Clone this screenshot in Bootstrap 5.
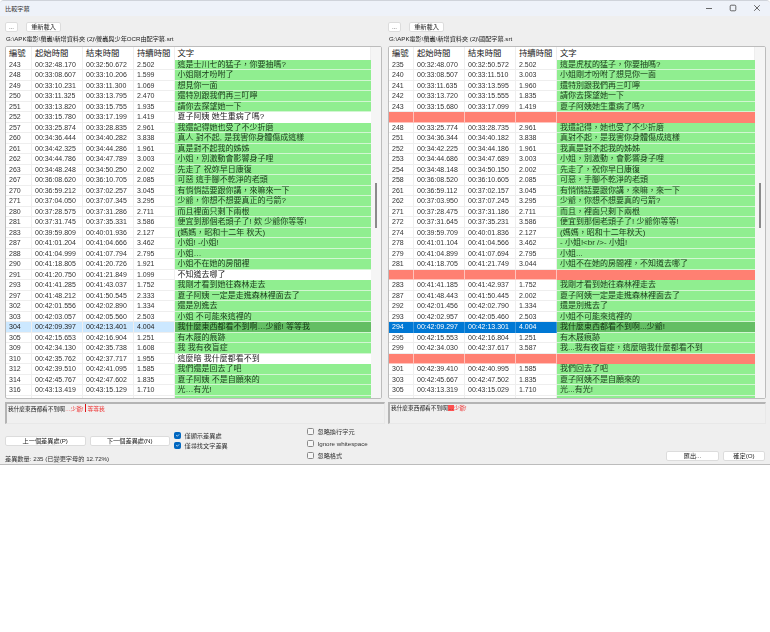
<!DOCTYPE html>
<html lang="zh-Hant">
<head>
<meta charset="utf-8">
<title>比較字幕</title>
<link href="https://cdn.jsdelivr.net/npm/bootstrap@5.3.0/dist/css/bootstrap.min.css" rel="stylesheet">
<style>
html,body{background:#fff;margin:0}
body{font-family:"Liberation Sans","Noto Sans CJK TC",sans-serif;color:#222}
.appwin{height:465px;width:770px;background:#efefef;border-bottom:1px solid #bcbcbc;border-top:1px solid #cfd3da;border-radius:4px 4px 0 0;overflow:hidden;filter:blur(.3px)}
.tbar{height:15px;background:#eef2f9;padding:0 9px 0 5px;font-size:6.2px;color:#333}
.tbar svg{display:block}
.panes{display:grid;grid-template-columns:380px 378px;column-gap:3px;padding:6px 4px 0 5px}
.wbtn{background:#fff;border:1px solid #dcdcdc;border-radius:2px;font-size:6.2px;line-height:8px;padding:0;height:10px;color:#222}
.dots{width:13px}.reload{width:35px}
.pathline{height:14px;font-size:6.15px;line-height:14px;padding-left:1px;white-space:nowrap}
.listbox{height:353px;border:1px solid #bcbcbc;border-radius:2px;background:#fff;overflow:hidden}
.lft{width:377px}
.sbar{width:10px;background:#f5f5f5;flex:none}
.sthumb{width:1.5px;height:45px;margin-top:136px;background:#8a8a8a}
.tblwrap{flex:1;overflow:hidden}
.cmp{margin:0;font-size:7px;color:#333}
.cmphead,.cmprow{display:grid;border:0}
.cmprow{height:10.5px;box-shadow:inset 0 -1px 0 #eee}
.lgrid{grid-template-columns:26px 51px 51px 40.5px 1fr}
.rgrid{grid-template-columns:25px 51px 51px 41px 1fr}
.cmphead{height:13.25px;font-size:8.4px;line-height:13px;color:#222;background:#fff}
.cmphead>div{padding-left:3px;border-right:1px solid #eee;white-space:nowrap}
.cmprow>div{padding-left:3px;line-height:10.5px;border-right:1px solid #eee;white-space:nowrap;overflow:hidden;color:#333;min-width:0}
.cmprow>div:last-child{background:#90ee90;font-size:8px;color:#1c3a1c;border-right:0;box-shadow:inset 0 -1px 0 #d2f6d2}
.cmprow.same>div:last-child{background:#fff;color:#222;box-shadow:none}
.cmprow.gap{background:#ff8072;box-shadow:inset 0 -1px 0 #ffc4bd}
.cmprow.gap>div{border-color:#ffc4bd}
.cmprow.gap>div:last-child{background:#ff8072;box-shadow:none}
.cmprow.selgrey{background:#cce8ff}
.cmprow.selgrey>div{color:#222}
.cmprow.selblue{background:#0078d4;box-shadow:none}
.cmprow.selblue>div{color:#fff;border-color:#3f98dd}
.cmprow.selgrey>div:last-child,.cmprow.selblue>div:last-child{background:#64be64;color:#123212}
.difftxt{height:22px;margin-top:3px;border:1px solid #e8e8e8;border-top:2px solid #b4b4b4;border-left:2px solid #b4b4b4;background:#f0f0f0;font-size:5.7px;line-height:9px;padding:0 0 0 1px;white-space:nowrap}
.dlft{width:380px}
.dm{color:#e33}.dbar{display:inline-block;width:1px;height:8px;background:#d11;margin:0 1.5px;vertical-align:-1.5px}
.dhit{background:#ff5050;color:#333;padding:0 .5px}
.lower{height:41px;padding:0 5px;font-size:6.2px}
.cola{width:165px;padding-top:12px}
.cola .wbtn{width:80.5px}
.status{margin-top:8px;line-height:9px;color:#333;white-space:nowrap;font-size:6.2px}
.colb{width:133px;margin-left:4px;padding-top:7px}
.colc{padding-top:2px}
.colb .chk{height:10px}
.colc .chk{height:12px}
.chk{color:#333;white-space:nowrap}
.chk .form-check-input{width:7px;height:7px;margin:0 3.5px 0 0;border-radius:1.5px;flex:none;border-color:#8a8a8a;background-color:#f6f6f6}
.chk .form-check-input:checked{background-color:#0067c0;border-color:#0067c0}
.cold{padding-top:27px}
.expbtn{width:53px}.okbtn{width:42px}
</style>
</head>
<body>
<div class="appwin d-flex flex-column">
  <div class="tbar d-flex align-items-center justify-content-between">
    <span>比較字幕</span>
    <div class="d-flex gap-3">
      <svg width="8" height="8" viewBox="0 0 8 8"><path d="M1 4.5h6" stroke="#444" stroke-width=".8"/></svg>
      <svg width="8" height="8" viewBox="0 0 8 8"><rect x="1.2" y="1.2" width="5.6" height="5.6" rx="1" fill="none" stroke="#444" stroke-width=".8"/></svg>
      <svg width="8" height="8" viewBox="0 0 8 8"><path d="M1.2 1.2l5.6 5.6M6.8 1.2L1.2 6.8" stroke="#444" stroke-width=".8"/></svg>
    </div>
  </div>
  <div class="panes">
    <div>
      <div class="d-flex gap-2"><button class="wbtn dots">...</button><button class="wbtn reload">重新載入</button></div>
      <div class="pathline">G:\APK電影\螢蟲\新增資料夾 (2)\螢蟲與少年OCR由配字幕.srt</div>
      <div class="listbox lft d-flex">
        <div class="tblwrap cmp">
<div class="cmphead lgrid"><div>編號</div><div>起始時間</div><div>結束時間</div><div>持續時間</div><div>文字</div></div>
<div class="cmprow lgrid"><div>243</div><div>00:32:48.170</div><div>00:32:50.672</div><div>2.502</div><div>這是士川七的猛子，你要抽嗎?</div></div>
<div class="cmprow lgrid"><div>248</div><div>00:33:08.607</div><div>00:33:10.206</div><div>1.599</div><div>小姐剛才吩咐了</div></div>
<div class="cmprow lgrid"><div>249</div><div>00:33:10.231</div><div>00:33:11.300</div><div>1.069</div><div>想見你一面</div></div>
<div class="cmprow lgrid"><div>250</div><div>00:33:11.325</div><div>00:33:13.795</div><div>2.470</div><div>還特別跟我們再三叮嚀</div></div>
<div class="cmprow lgrid"><div>251</div><div>00:33:13.820</div><div>00:33:15.755</div><div>1.935</div><div>請你去探望她一下</div></div>
<div class="cmprow lgrid same"><div>252</div><div>00:33:15.780</div><div>00:33:17.199</div><div>1.419</div><div>夏子阿姨 她生重病了嗎?</div></div>
<div class="cmprow lgrid"><div>257</div><div>00:33:25.874</div><div>00:33:28.835</div><div>2.961</div><div>我還記得她也受了不少折磨</div></div>
<div class="cmprow lgrid"><div>260</div><div>00:34:36.444</div><div>00:34:40.282</div><div>3.838</div><div>真人 對不起, 是我害你身體傷成這樣</div></div>
<div class="cmprow lgrid"><div>261</div><div>00:34:42.325</div><div>00:34:44.286</div><div>1.961</div><div>真是對不起我的姊姊</div></div>
<div class="cmprow lgrid"><div>262</div><div>00:34:44.786</div><div>00:34:47.789</div><div>3.003</div><div>小姐，別激動會影響身子哩</div></div>
<div class="cmprow lgrid"><div>263</div><div>00:34:48.248</div><div>00:34:50.250</div><div>2.002</div><div>先走了 祝妳早日康復</div></div>
<div class="cmprow lgrid"><div>267</div><div>00:36:08.620</div><div>00:36:10.705</div><div>2.085</div><div>可惡 這手腳不乾淨的老頭</div></div>
<div class="cmprow lgrid"><div>270</div><div>00:36:59.212</div><div>00:37:02.257</div><div>3.045</div><div>有悄悄話要跟你講，來嘛來一下</div></div>
<div class="cmprow lgrid"><div>271</div><div>00:37:04.050</div><div>00:37:07.345</div><div>3.295</div><div>少爺，你想不想要真正的弓箭?</div></div>
<div class="cmprow lgrid"><div>280</div><div>00:37:28.575</div><div>00:37:31.286</div><div>2.711</div><div>而且裡面只剩下兩根</div></div>
<div class="cmprow lgrid"><div>281</div><div>00:37:31.745</div><div>00:37:35.331</div><div>3.586</div><div>便宜到那個老頭子了! 欸 少爺你等等!</div></div>
<div class="cmprow lgrid"><div>283</div><div>00:39:59.809</div><div>00:40:01.936</div><div>2.127</div><div>(媽媽，昭和十二年 秋天)</div></div>
<div class="cmprow lgrid"><div>287</div><div>00:41:01.204</div><div>00:41:04.666</div><div>3.462</div><div>小姐! -小姐!</div></div>
<div class="cmprow lgrid"><div>288</div><div>00:41:04.999</div><div>00:41:07.794</div><div>2.795</div><div>小姐…</div></div>
<div class="cmprow lgrid"><div>290</div><div>00:41:18.805</div><div>00:41:20.726</div><div>1.921</div><div>小姐不在她的房間裡</div></div>
<div class="cmprow lgrid same"><div>291</div><div>00:41:20.750</div><div>00:41:21.849</div><div>1.099</div><div>不知道去哪了</div></div>
<div class="cmprow lgrid"><div>293</div><div>00:41:41.285</div><div>00:41:43.037</div><div>1.752</div><div>我剛才看到她往森林走去</div></div>
<div class="cmprow lgrid"><div>297</div><div>00:41:48.212</div><div>00:41:50.545</div><div>2.333</div><div>夏子阿姨 一定是走進森林裡面去了</div></div>
<div class="cmprow lgrid"><div>302</div><div>00:42:01.556</div><div>00:42:02.890</div><div>1.334</div><div>還是別進去</div></div>
<div class="cmprow lgrid"><div>303</div><div>00:42:03.057</div><div>00:42:05.560</div><div>2.503</div><div>小姐 不可能來這裡的</div></div>
<div class="cmprow lgrid selgrey"><div>304</div><div>00:42:09.397</div><div>00:42:13.401</div><div>4.004</div><div>我什麼東西都看不到啊…少爺! 等等我</div></div>
<div class="cmprow lgrid"><div>305</div><div>00:42:15.653</div><div>00:42:16.904</div><div>1.251</div><div>有木屐的痕跡</div></div>
<div class="cmprow lgrid"><div>309</div><div>00:42:34.130</div><div>00:42:35.738</div><div>1.608</div><div>我 我有夜盲症</div></div>
<div class="cmprow lgrid same"><div>310</div><div>00:42:35.762</div><div>00:42:37.717</div><div>1.955</div><div>這麼暗 我什麼都看不到</div></div>
<div class="cmprow lgrid"><div>312</div><div>00:42:39.510</div><div>00:42:41.095</div><div>1.585</div><div>我們還是回去了吧</div></div>
<div class="cmprow lgrid"><div>314</div><div>00:42:45.767</div><div>00:42:47.602</div><div>1.835</div><div>夏子阿姨 不是自願來的</div></div>
<div class="cmprow lgrid"><div>316</div><div>00:43:13.419</div><div>00:43:15.129</div><div>1.710</div><div>光…有光!</div></div>
<div class="cmprow lgrid"><div></div><div></div><div></div><div></div><div></div></div>
        </div>
        <div class="sbar d-flex justify-content-center"><div class="sthumb"></div></div>
      </div>
      <div class="difftxt dlft">我什麼東西都看不到啊<span class="dm">…少爺!</span><span class="dbar"></span><span class="dm">等等我</span></div>
    </div>
    <div>
      <div class="d-flex gap-2"><button class="wbtn dots">...</button><button class="wbtn reload">重新載入</button></div>
      <div class="pathline">G:\APK電影\螢蟲\新增資料夾 (2)\國配字幕.srt</div>
      <div class="listbox d-flex">
        <div class="tblwrap cmp">
<div class="cmphead rgrid"><div>編號</div><div>起始時間</div><div>結束時間</div><div>持續時間</div><div>文字</div></div>
<div class="cmprow rgrid"><div>235</div><div>00:32:48.070</div><div>00:32:50.572</div><div>2.502</div><div>這是虎杖的猛子，你要抽嗎?</div></div>
<div class="cmprow rgrid"><div>240</div><div>00:33:08.507</div><div>00:33:11.510</div><div>3.003</div><div>小姐剛才吩咐了想見你一面</div></div>
<div class="cmprow rgrid"><div>241</div><div>00:33:11.635</div><div>00:33:13.595</div><div>1.960</div><div>還特別跟我們再三叮嚀</div></div>
<div class="cmprow rgrid"><div>242</div><div>00:33:13.720</div><div>00:33:15.555</div><div>1.835</div><div>請你去探望她一下</div></div>
<div class="cmprow rgrid"><div>243</div><div>00:33:15.680</div><div>00:33:17.099</div><div>1.419</div><div>夏子阿姨她生重病了嗎?</div></div>
<div class="cmprow rgrid gap"><div></div><div></div><div></div><div></div><div></div></div>
<div class="cmprow rgrid"><div>248</div><div>00:33:25.774</div><div>00:33:28.735</div><div>2.961</div><div>我還記得，她也受了不少折磨</div></div>
<div class="cmprow rgrid"><div>251</div><div>00:34:36.344</div><div>00:34:40.182</div><div>3.838</div><div>真對不起，是我害你身體傷成這樣</div></div>
<div class="cmprow rgrid"><div>252</div><div>00:34:42.225</div><div>00:34:44.186</div><div>1.961</div><div>我真是對不起我的姊姊</div></div>
<div class="cmprow rgrid"><div>253</div><div>00:34:44.686</div><div>00:34:47.689</div><div>3.003</div><div>小姐，別激動，會影響身子哩</div></div>
<div class="cmprow rgrid"><div>254</div><div>00:34:48.148</div><div>00:34:50.150</div><div>2.002</div><div>先走了，祝你早日康復</div></div>
<div class="cmprow rgrid"><div>258</div><div>00:36:08.520</div><div>00:36:10.605</div><div>2.085</div><div>可惡，手腳不乾淨的老頭</div></div>
<div class="cmprow rgrid"><div>261</div><div>00:36:59.112</div><div>00:37:02.157</div><div>3.045</div><div>有悄悄話要跟你講，來嘛，來一下</div></div>
<div class="cmprow rgrid"><div>262</div><div>00:37:03.950</div><div>00:37:07.245</div><div>3.295</div><div>少爺，你想不想要真的弓箭?</div></div>
<div class="cmprow rgrid"><div>271</div><div>00:37:28.475</div><div>00:37:31.186</div><div>2.711</div><div>而且，裡面只剩下兩根</div></div>
<div class="cmprow rgrid"><div>272</div><div>00:37:31.645</div><div>00:37:35.231</div><div>3.586</div><div>便宜到那個老頭子了! 少爺你等等!</div></div>
<div class="cmprow rgrid"><div>274</div><div>00:39:59.709</div><div>00:40:01.836</div><div>2.127</div><div>(媽媽，昭和十二年秋天)</div></div>
<div class="cmprow rgrid"><div>278</div><div>00:41:01.104</div><div>00:41:04.566</div><div>3.462</div><div>- 小姐!&lt;br /&gt;- 小姐!</div></div>
<div class="cmprow rgrid"><div>279</div><div>00:41:04.899</div><div>00:41:07.694</div><div>2.795</div><div>小姐...</div></div>
<div class="cmprow rgrid"><div>281</div><div>00:41:18.705</div><div>00:41:21.749</div><div>3.044</div><div>小姐不在她的房間裡，不知道去哪了</div></div>
<div class="cmprow rgrid gap"><div></div><div></div><div></div><div></div><div></div></div>
<div class="cmprow rgrid"><div>283</div><div>00:41:41.185</div><div>00:41:42.937</div><div>1.752</div><div>我剛才看到她往森林裡走去</div></div>
<div class="cmprow rgrid"><div>287</div><div>00:41:48.443</div><div>00:41:50.445</div><div>2.002</div><div>夏子阿姨一定是走進森林裡面去了</div></div>
<div class="cmprow rgrid"><div>292</div><div>00:42:01.456</div><div>00:42:02.790</div><div>1.334</div><div>還是別進去了</div></div>
<div class="cmprow rgrid"><div>293</div><div>00:42:02.957</div><div>00:42:05.460</div><div>2.503</div><div>小姐不可能來這裡的</div></div>
<div class="cmprow rgrid selblue"><div>294</div><div>00:42:09.297</div><div>00:42:13.301</div><div>4.004</div><div>我什麼東西都看不到啊...少爺!</div></div>
<div class="cmprow rgrid"><div>295</div><div>00:42:15.553</div><div>00:42:16.804</div><div>1.251</div><div>有木屐痕跡</div></div>
<div class="cmprow rgrid"><div>299</div><div>00:42:34.030</div><div>00:42:37.617</div><div>3.587</div><div>我...我有夜盲症，這麼暗我什麼都看不到</div></div>
<div class="cmprow rgrid gap"><div></div><div></div><div></div><div></div><div></div></div>
<div class="cmprow rgrid"><div>301</div><div>00:42:39.410</div><div>00:42:40.995</div><div>1.585</div><div>我們回去了吧</div></div>
<div class="cmprow rgrid"><div>303</div><div>00:42:45.667</div><div>00:42:47.502</div><div>1.835</div><div>夏子阿姨不是自願來的</div></div>
<div class="cmprow rgrid"><div>305</div><div>00:43:13.319</div><div>00:43:15.029</div><div>1.710</div><div>光...有光!</div></div>
<div class="cmprow rgrid"><div></div><div></div><div></div><div></div><div></div></div>
        </div>
        <div class="sbar d-flex justify-content-center"><div class="sthumb"></div></div>
      </div>
      <div class="difftxt">我什麼東西都看不到啊<span class="dhit">...</span><span class="dm">少爺!</span></div>
    </div>
  </div>
  <div class="lower d-flex">
    <div class="cola">
      <div class="d-flex gap-1"><button class="wbtn">上一個差異處(P)</button><button class="wbtn">下一個差異處(N)</button></div>
      <div class="status">差異數量: 235 (已變更字母的 12.72%)</div>
    </div>
    <div class="colb">
      <label class="chk d-flex align-items-center"><input class="form-check-input" type="checkbox" checked>僅顯示差異處</label>
      <label class="chk d-flex align-items-center"><input class="form-check-input" type="checkbox" checked>僅尋找文字差異</label>
    </div>
    <div class="colc">
      <label class="chk d-flex align-items-center"><input class="form-check-input" type="checkbox">忽略換行字元</label>
      <label class="chk d-flex align-items-center"><input class="form-check-input" type="checkbox">Ignore whitespace</label>
      <label class="chk d-flex align-items-center"><input class="form-check-input" type="checkbox">忽略格式</label>
    </div>
    <div class="cold ms-auto d-flex gap-1 align-items-start"><button class="wbtn expbtn">匯出...</button><button class="wbtn okbtn">確定(O)</button></div>
  </div>
</div>
<script src="https://cdn.jsdelivr.net/npm/bootstrap@5.3.0/dist/js/bootstrap.bundle.min.js"></script>
</body>
</html>
